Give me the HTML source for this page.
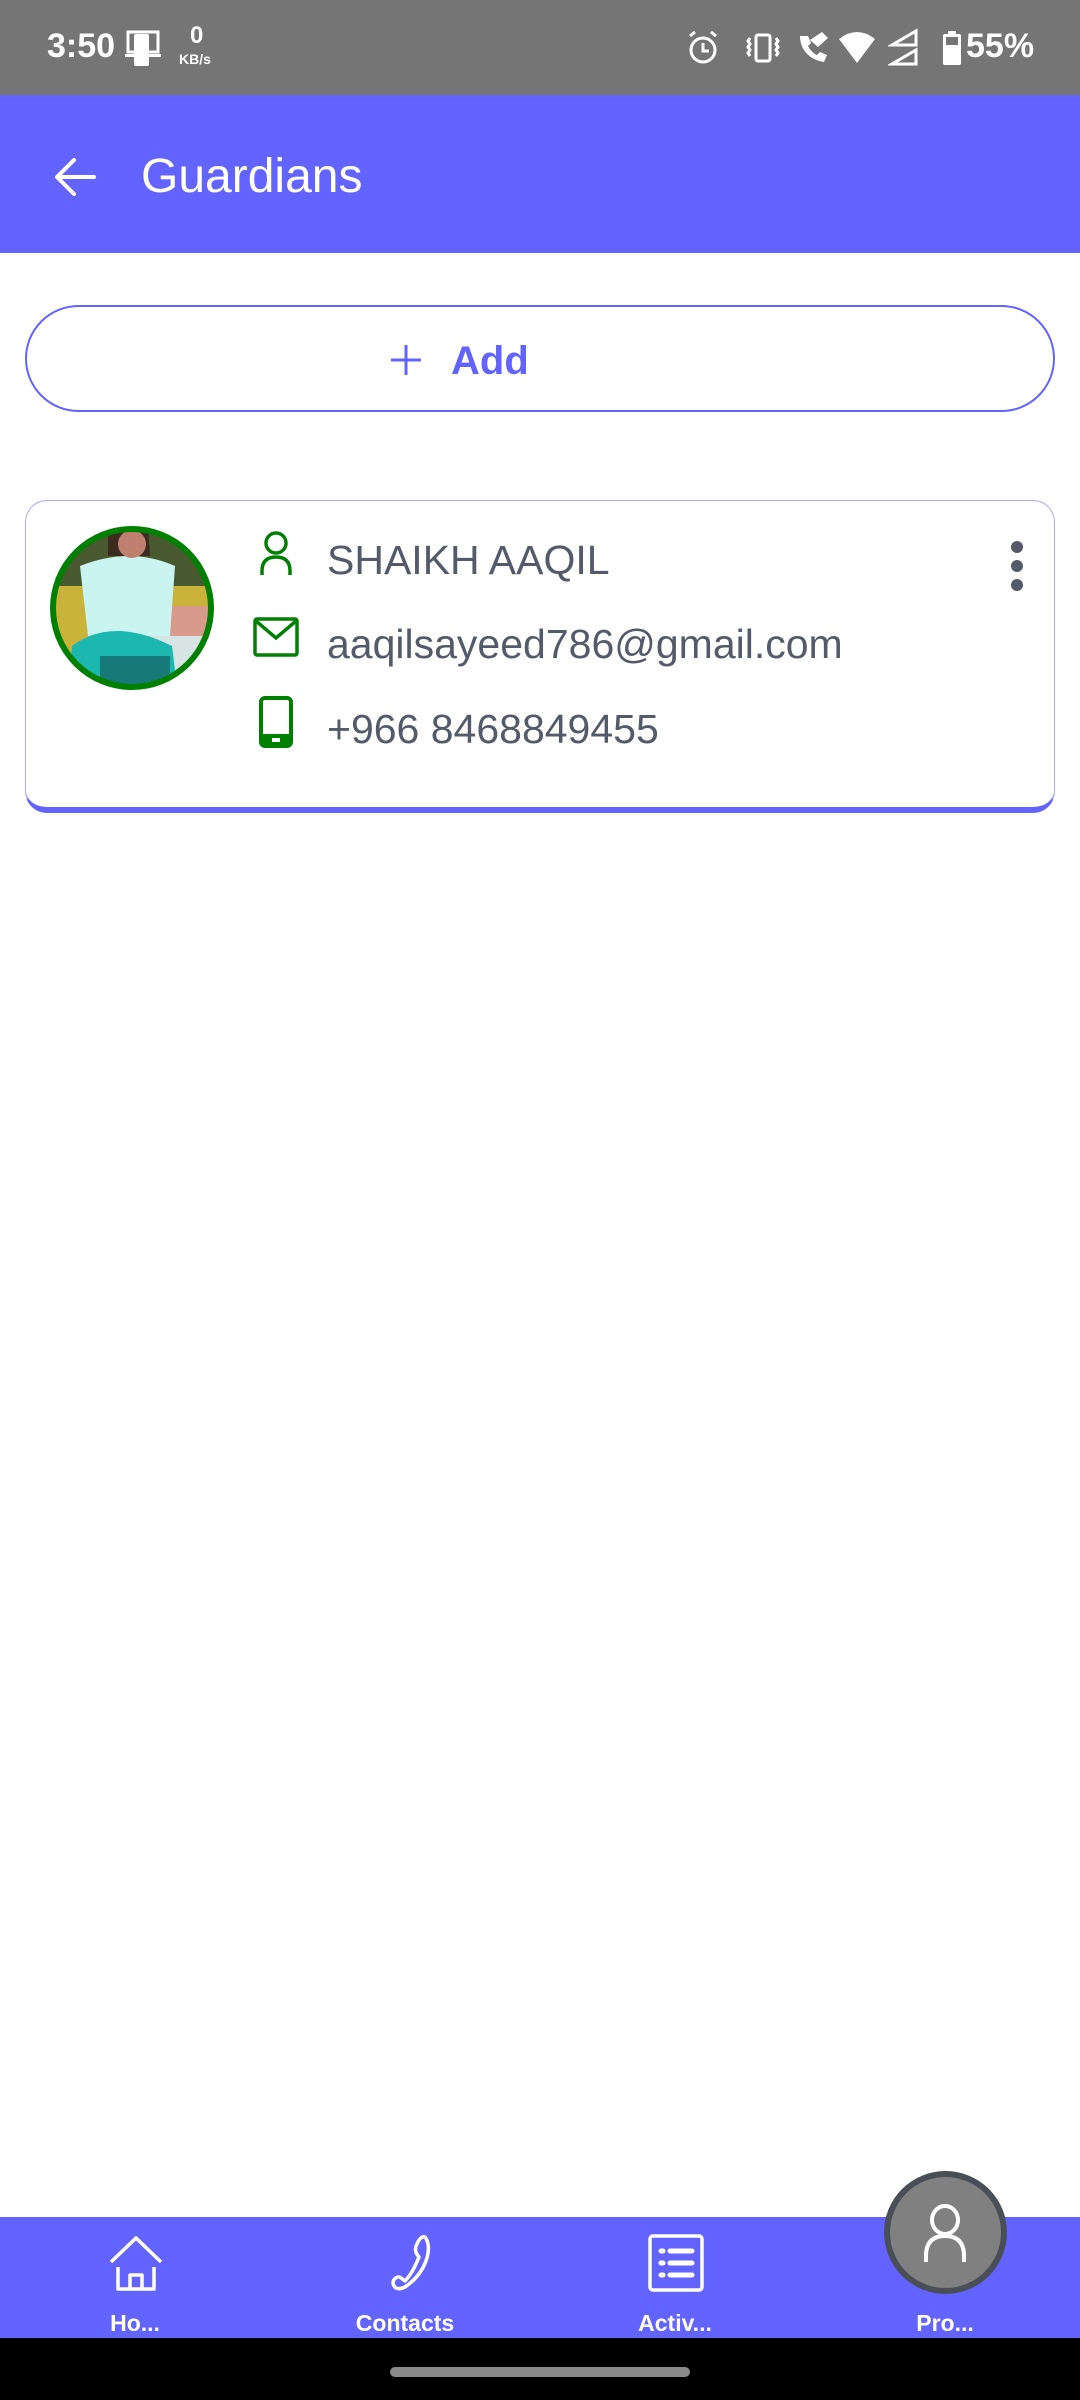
<!DOCTYPE html>
<html><head><meta charset="utf-8"><style>
*{margin:0;padding:0;box-sizing:border-box}
body{width:1080px;height:2400px;position:relative;background:#fff;font-family:"Liberation Sans",Roboto,sans-serif;overflow:hidden}
.abs{position:absolute}
.sb{top:0;left:0;width:1080px;height:95px;background:#757575;color:#fff}
.bar{top:95px;left:0;width:1080px;height:158px;background:#6363ff}
.txt{color:#555a6a;font-size:41px;left:327px;white-space:nowrap}
.nav{top:2217px;left:0;width:1080px;height:121px;background:#6363ff}
.lab{color:#fff;font-weight:bold;font-size:23px;top:2310px;width:200px;text-align:center}
</style></head><body>
<div class="abs sb">
 <div class="abs" style="left:47px;top:27px;font-size:34px;font-weight:bold">3:50</div>
 <svg class="abs" style="left:125px;top:30px" width="40" height="38" viewBox="0 0 40 38"><rect x="3" y="2" width="30" height="20" fill="none" stroke="#fff" stroke-width="3"/><rect x="9" y="4" width="15" height="32" rx="2" fill="#fff"/><rect x="0" y="24" width="36" height="3" fill="#fff"/></svg>
 <div class="abs" style="left:190px;top:22px;font-size:24px;font-weight:bold">0</div>
 <div class="abs" style="left:179px;top:51px;font-size:14px;font-weight:bold">KB/s</div>
 <svg class="abs" style="left:685px;top:30px" width="36" height="36" viewBox="0 0 36 36" fill="none" stroke="#fff" stroke-width="3"><circle cx="18" cy="20" r="12"/><path d="M18 13v8h6M5 6l5-4M31 6l-5-4"/></svg>
 <svg class="abs" style="left:746px;top:32px" width="34" height="32" viewBox="0 0 34 32" fill="none" stroke="#fff" stroke-width="3"><rect x="10" y="3" width="14" height="26" rx="2"/><path d="M4 6l-2 3 2 3-2 3 2 3-2 3 2 3M30 6l2 3-2 3 2 3-2 3 2 3-2 3"/></svg>
 <svg class="abs" style="left:796px;top:30px" width="36" height="36" viewBox="0 0 36 36"><path d="M4 6c0 14 10 24 24 26l3-7-7-3-3 3c-4-2-7-5-9-9l3-3-3-7z" fill="#fff"/><path d="M14 10l12-8 6 6-10 9z" fill="#fff"/></svg>
 <svg class="abs" style="left:838px;top:32px" width="38" height="32" viewBox="0 0 38 32"><path d="M1 7q18-14 36 0L19 31z" fill="#fff"/></svg>
 <svg class="abs" style="left:888px;top:28px" width="30" height="38" viewBox="0 0 30 38" fill="none" stroke="#fff" stroke-width="3"><path d="M28 3v14H4zM28 22v14H4z"/></svg>
 <svg class="abs" style="left:942px;top:31px" width="20" height="34" viewBox="0 0 20 34"><rect x="6" y="0" width="8" height="4" fill="#fff"/><rect x="1" y="3" width="18" height="31" rx="2" fill="#fff"/><rect x="4" y="6" width="12" height="8" fill="#757575"/></svg>
 <div class="abs" style="left:966px;top:27px;font-size:34px;font-weight:bold">55%</div>
</div>
<div class="abs bar">
 <svg class="abs" style="left:54px;top:62px" width="42" height="40" viewBox="0 0 42 40" fill="none" stroke="#fff" stroke-width="4" stroke-linecap="round" stroke-linejoin="round"><path d="M40 20H4M20 3L3 20l17 17"/></svg>
 <div class="abs" style="left:141px;top:54px;font-size:48px;color:#fff">Guardians</div>
</div>
<div class="abs" style="left:25px;top:305px;width:1030px;height:107px;border:2px solid #6363ff;border-radius:54px"></div>
<svg class="abs" style="left:390px;top:344px" width="32" height="32" viewBox="0 0 32 32" stroke="#6363ff" stroke-width="3"><path d="M16 1v30M1 16h30"/></svg>
<div class="abs" style="left:451px;top:339px;font-size:40px;font-weight:bold;color:#6363ff">Add</div>

<div class="abs" style="left:25px;top:500px;width:1030px;height:313px;border:1px solid #aaaaff;border-bottom:6px solid #6363ff;border-radius:22px"></div>
<svg class="abs" style="left:50px;top:526px" width="164" height="164" viewBox="0 0 164 164">
 <defs><clipPath id="c"><circle cx="82" cy="82" r="80"/></clipPath></defs>
 <g clip-path="url(#c)">
  <rect width="164" height="164" fill="#c9b33a"/>
  <rect x="0" y="0" width="164" height="60" fill="#4a5a30"/>
  <rect x="120" y="80" width="44" height="40" fill="#d89a8a"/>
  <rect x="100" y="110" width="64" height="54" fill="#d8e4e4"/>
  <path d="M58 0h40l2 30H58z" fill="#3a2a20"/>
  <path d="M30 40q50-20 95 0l-5 70H38z" fill="#c9f4f0"/>
  <path d="M22 120q40-30 100 0l5 40H20z" fill="#1cb8b0"/>
  <path d="M50 130h70v34H50z" fill="#177a78"/>
  <circle cx="82" cy="18" r="14" fill="#c08070"/>
 </g>
 <circle cx="82" cy="82" r="79" fill="none" stroke="#008000" stroke-width="6"/>
</svg>
<svg class="abs" style="left:258px;top:530px" width="36" height="46" viewBox="0 0 36 46" fill="none" stroke="#008000" stroke-width="3.5"><circle cx="18" cy="13" r="10"/><path d="M4 45v-4q0-14 14-14t14 14v4"/></svg>
<svg class="abs" style="left:253px;top:617px" width="46" height="40" viewBox="0 0 46 40" fill="none" stroke="#008000" stroke-width="3.5"><rect x="2" y="2" width="42" height="36" rx="2"/><path d="M3 4l20 17 20-17"/></svg>
<svg class="abs" style="left:259px;top:696px" width="34" height="52" viewBox="0 0 34 52"><rect x="2" y="2" width="30" height="48" rx="4" fill="none" stroke="#008000" stroke-width="4"/><rect x="2" y="38" width="30" height="12" fill="#008000"/><rect x="13" y="42" width="8" height="4" fill="#fff"/></svg>
<div class="abs txt" style="top:537px">SHAIKH AAQIL</div>
<div class="abs txt" style="top:621px">aaqilsayeed786@gmail.com</div>
<div class="abs txt" style="top:706px">+966 8468849455</div>
<svg class="abs" style="left:1009px;top:540px" width="16" height="52" viewBox="0 0 16 52" fill="#555a6a"><ellipse cx="8" cy="7" rx="6" ry="6"/><ellipse cx="8" cy="26" rx="6" ry="6"/><ellipse cx="8" cy="45" rx="6" ry="6"/></svg>

<div class="abs nav"></div>
<svg class="abs" style="left:108px;top:2235px" width="56" height="56" viewBox="0 0 56 56" fill="none" stroke="#fff" stroke-width="3.5" stroke-linejoin="round"><path d="M3 27L28 3l25 24M10 32v22h36V32M22 54V40h12v14"/></svg>
<svg class="abs" style="left:375px;top:2233px" width="60" height="60" viewBox="0 0 60 60" fill="none" stroke="#fff" stroke-width="3.5" stroke-linejoin="round"><path d="M50 4c8 10 2 35-20 50-6 3-11 2-12-4 0-4 5-8 8-5l4 3c6-6 10-14 14-24-3-3-5-8-2-13 2-5 5-8 8-7z"/></svg>
<svg class="abs" style="left:648px;top:2234px" width="56" height="58" viewBox="0 0 56 58" fill="none" stroke="#fff" stroke-width="3.5"><rect x="2" y="2" width="52" height="54" rx="3"/><path d="M13 17h2M13 29h2M13 41h2M22 17h22M22 29h22M22 41h22" stroke-width="5" stroke-linecap="round"/></svg>
<div class="abs" style="left:884px;top:2171px;width:123px;height:123px;border-radius:50%;background:#808080;border:6px solid #4a4f57"></div>
<svg class="abs" style="left:922px;top:2204px" width="46" height="60" viewBox="0 0 46 60" fill="none" stroke="#fff" stroke-width="4"><ellipse cx="23" cy="16" rx="13" ry="14"/><path d="M4 58v-6q0-20 19-20t19 20v6"/></svg>
<div class="abs lab" style="left:35px">Ho...</div>
<div class="abs lab" style="left:305px">Contacts</div>
<div class="abs lab" style="left:575px">Activ...</div>
<div class="abs lab" style="left:845px">Pro...</div>
<div class="abs" style="top:2338px;left:0;width:1080px;height:62px;background:#000"></div>
<div class="abs" style="top:2367px;left:390px;width:300px;height:10px;border-radius:5px;background:#8a8a8a"></div>
</body></html>
